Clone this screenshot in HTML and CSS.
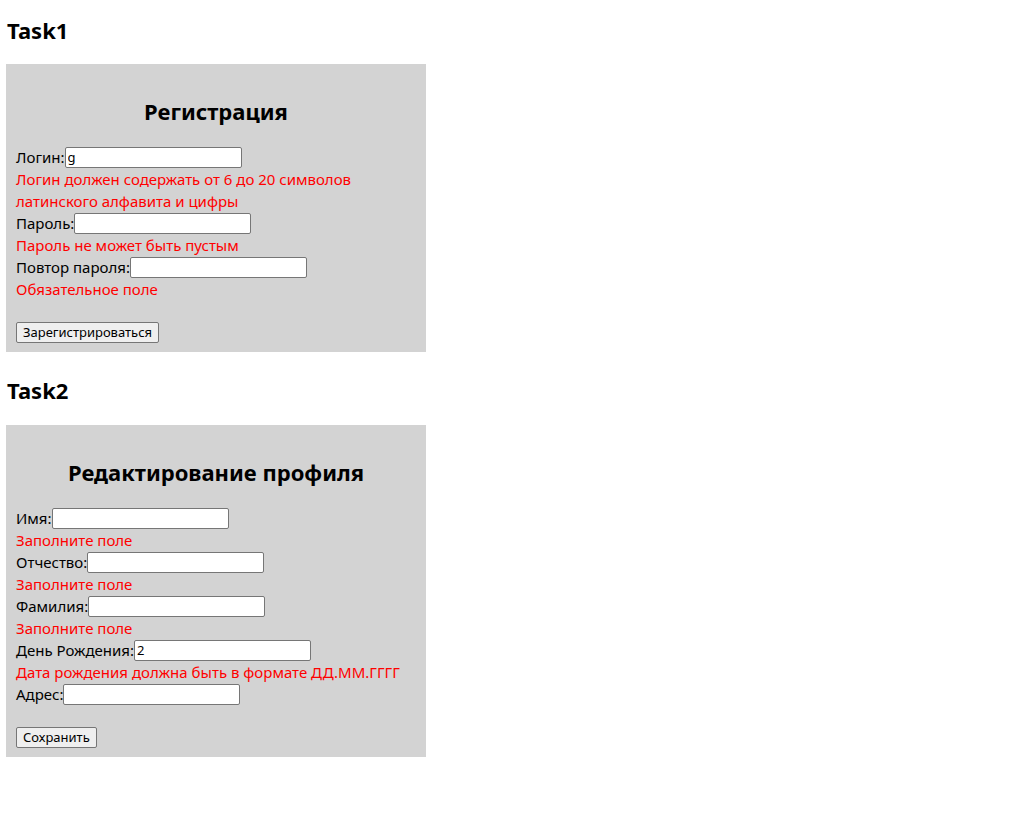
FILE: index.html
```html
<!DOCTYPE html>
<html lang="ru">
<head>
<meta charset="utf-8">
<title>Tasks</title>
<link rel="stylesheet" href="styles.css">
</head>
<body>
<h2 class="task-title first">Task1</h2>
<form class="card">
  <h2 class="card-title">Регистрация</h2>
  <div class="row"><label>Логин:</label><input class="field" type="text" value="g"></div>
  <div class="error">Логин должен содержать от 6 до 20 символов<br>латинского алфавита и цифры</div>
  <div class="row"><label>Пароль:</label><input class="field" type="password"></div>
  <div class="error">Пароль не может быть пустым</div>
  <div class="row"><label>Повтор пароля:</label><input class="field" type="password"></div>
  <div class="error">Обязательное поле</div>
  <div class="spacer"></div>
  <div class="row"><button class="btn" type="button">Зарегистрироваться</button></div>
</form>
<h2 class="task-title">Task2</h2>
<form class="card">
  <h2 class="card-title">Редактирование профиля</h2>
  <div class="row"><label>Имя:</label><input class="field" type="text"></div>
  <div class="error">Заполните поле</div>
  <div class="row"><label>Отчество:</label><input class="field" type="text"></div>
  <div class="error">Заполните поле</div>
  <div class="row"><label>Фамилия:</label><input class="field" type="text"></div>
  <div class="error">Заполните поле</div>
  <div class="row"><label>День Рождения:</label><input class="field" type="text" value="2"></div>
  <div class="error">Дата рождения должна быть в формате ДД.ММ.ГГГГ</div>
  <div class="row"><label>Адрес:</label><input class="field" type="text"></div>
  <div class="spacer"></div>
  <div class="row"><button class="btn" type="button">Сохранить</button></div>
</form>
</body>
</html>
```
FILE: styles.css
```css
html, body {
  background: #ffffff;
}
body {
  margin: 0;
  padding: 0 6px;
  font-family: "Noto Sans", "Open Sans", sans-serif;
  font-size: 15px;
  color: #000;
}
.task-title {
  font-size: 22px;
  font-weight: 700;
  line-height: 32px;
  margin: 22px 0 19px 1px;
}
.task-title.first {
  margin-top: 14px;
  margin-bottom: 18px;
}
.card {
  width: 420px;
  box-sizing: border-box;
  background: #d3d3d3;
  padding: 11px 10px 9px;
  margin: 0;
}
.card-title {
  text-align: center;
  font-size: 22px;
  font-weight: 700;
  line-height: 32px;
  margin: 20px 0 19px;
}
.row {
  display: flex;
  align-items: center;
  height: 22px;
  line-height: 22px;
}
.error {
  color: #ff0000;
  line-height: 22px;
}
.spacer {
  height: 21px;
}
.field {
  width: 177px;
  height: 21px;
  box-sizing: border-box;
  border: 1px solid #767676;
  border-radius: 2px;
  background: #fff;
  padding: 1px 2px;
  margin: 0;
  font-family: "Noto Sans", sans-serif;
  font-size: 13px;
}
.btn {
  height: 21px;
  box-sizing: border-box;
  border: 1px solid #767676;
  border-radius: 2px;
  background: #efefef;
  padding: 0 6px;
  margin: 0;
  font-family: "Noto Sans", sans-serif;
  font-size: 13px;
  color: #000;
}
```
